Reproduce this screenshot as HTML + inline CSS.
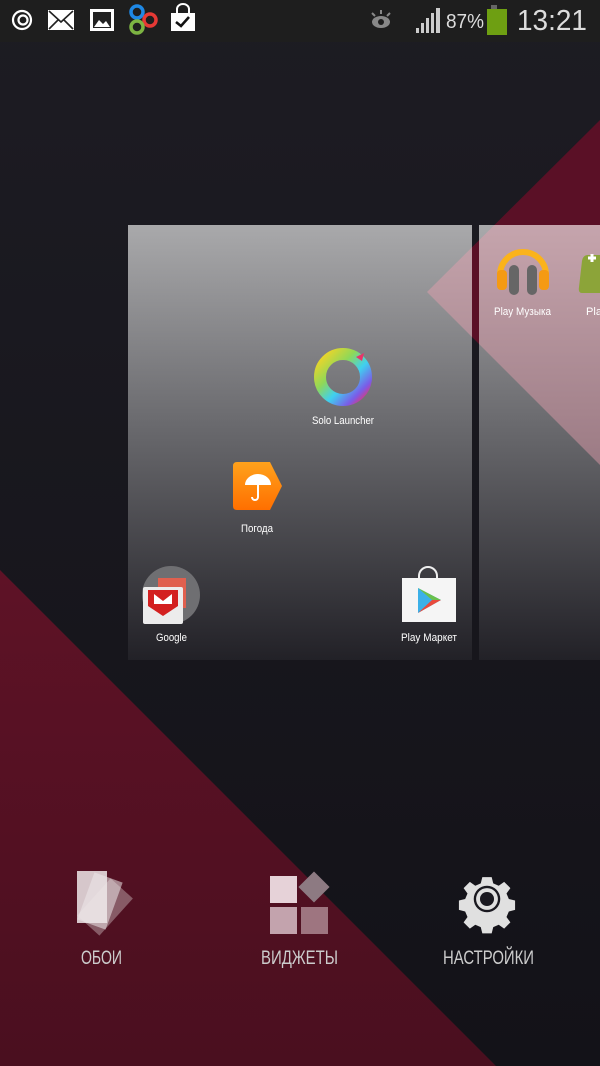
<!DOCTYPE html>
<html><head><meta charset="utf-8"><style>
html,body{margin:0;padding:0;background:#18171e;width:600px;height:1066px;overflow:hidden}
svg{display:block}
text{font-family:"Liberation Sans",sans-serif}
</style></head><body>
<svg width="600" height="1066" viewBox="0 0 600 1066" xmlns="http://www.w3.org/2000/svg">
<defs>
<linearGradient id="card" x1="0" y1="0" x2="0" y2="1">
<stop offset="0" stop-color="#a9a9ab"/><stop offset="0.45" stop-color="#6b6b6f"/><stop offset="1" stop-color="#222127"/>
</linearGradient>
<linearGradient id="bg" x1="0" y1="0" x2="0" y2="1">
<stop offset="0" stop-color="#1d1c23"/><stop offset="1" stop-color="#131218"/>
</linearGradient>
<linearGradient id="red" x1="0" y1="0" x2="0" y2="1">
<stop offset="0" stop-color="#5e1226"/><stop offset="1" stop-color="#4a0f1f"/>
</linearGradient>
<linearGradient id="ora" x1="0" y1="0" x2="0" y2="1"><stop offset="0" stop-color="#ffa21c"/><stop offset="1" stop-color="#ff6f00"/></linearGradient>
<linearGradient id="solo" x1="0" y1="0" x2="1" y2="1"><stop offset="0" stop-color="#f9d423"/><stop offset="0.35" stop-color="#8fd858"/><stop offset="0.6" stop-color="#3fd0f0"/><stop offset="0.85" stop-color="#7b5be8"/><stop offset="1" stop-color="#e8346a"/></linearGradient>
<clipPath id="cards"><rect x="128" y="225" width="344" height="435"/><rect x="479" y="225" width="121" height="435"/></clipPath>
</defs>
<rect width="600" height="1066" fill="url(#bg)"/>
<!-- status bar -->
<rect width="600" height="42" fill="#1e1e1e"/>
<g fill="none" stroke="#fff" stroke-width="2.2">
<circle cx="22" cy="20" r="9"/><circle cx="23" cy="20" r="4.5"/>
</g>
<rect x="48" y="10" width="26" height="20" fill="#fff"/>
<path d="M49 11 L61 22 L73 11 M49 29 L58 20 M73 29 L64 20" stroke="#222" stroke-width="1.6" fill="none"/>
<rect x="90" y="9" width="24" height="22" fill="#fff"/>
<rect x="93" y="12" width="18" height="16" fill="#222"/>
<path d="M94 27 L99 20 L103 24 L106 21 L110 27Z" fill="#fff"/>
<circle cx="137" cy="12" r="6" fill="none" stroke="#1e88e5" stroke-width="3.5"/>
<circle cx="150" cy="20" r="6" fill="none" stroke="#e53935" stroke-width="3.5"/>
<circle cx="137" cy="27" r="6" fill="none" stroke="#7cb342" stroke-width="3.5"/>
<rect x="171" y="13" width="24" height="18" fill="#fff"/>
<path d="M177 13 V9 a6 5 0 0 1 12 0 V13" fill="none" stroke="#fff" stroke-width="2"/>
<path d="M176 22 L181 26 L189 17" stroke="#111" stroke-width="2.6" fill="none"/>
<ellipse cx="381" cy="22" rx="9" ry="6" fill="#888"/><circle cx="381" cy="22" r="3" fill="#1e1e1e"/>
<path d="M372 13 l3 3 M381 10 v4 M390 13 l-3 3" stroke="#888" stroke-width="2"/>
<g fill="#ccc"><rect x="416" y="28" width="3" height="5"/><rect x="421" y="23" width="3" height="10"/><rect x="426" y="18" width="3" height="15"/><rect x="431" y="13" width="3" height="20"/><rect x="436" y="8" width="4" height="25"/></g>
<text x="446" y="28" fill="#ddd" font-size="20" textLength="38" lengthAdjust="spacingAndGlyphs">87%</text>
<rect x="491" y="5" width="6" height="4" fill="#666"/>
<rect x="487" y="9" width="20" height="26" fill="#6e9f12"/>
<text x="517" y="30" fill="#ddd" font-size="29" textLength="70" lengthAdjust="spacingAndGlyphs">13:21</text>
<!-- red shapes -->
<path d="M0 570 L496 1066 L0 1066Z" fill="url(#red)"/>
<path d="M427 292 L600 120 L600 465Z" fill="#5a1026"/>
<!-- cards -->
<rect x="128" y="225" width="344" height="435" fill="url(#card)"/>
<rect x="479" y="225" width="121" height="435" fill="url(#card)"/>
<path d="M427 292 L600 120 L600 465Z" fill="#e8a0b0" opacity="0.45" clip-path="url(#cards)"/>
<g font-size="11" fill="#fff">
<!-- Play music -->
<path d="M500 275 a22 22 0 0 1 46 0" fill="none" stroke="#fbb31b" stroke-width="6"/>
<rect x="497" y="270" width="10" height="20" rx="4" fill="#f59a13"/>
<rect x="539" y="270" width="10" height="20" rx="4" fill="#f59a13"/>
<rect x="509" y="265" width="10" height="30" rx="5" fill="#666"/>
<rect x="527" y="265" width="10" height="30" rx="5" fill="#666"/>
<text x="494" y="315" textLength="57" lengthAdjust="spacingAndGlyphs">Play Музыка</text>
<path d="M582 255 h18 v38 h-18 q-4 0 -3 -6 l3 -26 q1 -6 6 -6z" fill="#8ca439"/>
<path d="M588 258 h8 M592 254 v8" stroke="#fff" stroke-width="3"/>
<text x="586" y="315" textLength="16" lengthAdjust="spacingAndGlyphs">Pla</text>
<!-- solo -->
<circle cx="343" cy="377" r="23" fill="none" stroke="url(#solo)" stroke-width="12"/>
<path d="M356 357 l8 -4 l-2 8z" fill="#e8346a"/>
<text x="312" y="424" textLength="62" lengthAdjust="spacingAndGlyphs">Solo Launcher</text>
<!-- pogoda -->
<path d="M237 462 h33 l12 24 l-12 24 h-33 q-4 0 -4 -4 v-40 q0 -4 4 -4z" fill="url(#ora)"/>
<path d="M245 485 a13 11 0 0 1 26 0z" fill="#fff"/>
<path d="M258 484 v13 a3 3 0 0 1 -6 0" fill="none" stroke="#fff" stroke-width="2"/>
<text x="241" y="532" textLength="32" lengthAdjust="spacingAndGlyphs">Погода</text>
<!-- google -->
<circle cx="171" cy="595" r="29" fill="#6f6f72"/>
<rect x="158" y="578" width="28" height="30" fill="#e0604f"/>
<rect x="143" y="587" width="40" height="37" rx="2" fill="#ececec"/>
<path d="M148 590 h30 v16 l-15 10 l-15 -10z" fill="#d32020"/>
<path d="M154 594 l9 7 l9 -7 v10 h-18z" fill="#fff"/>
<text x="156" y="641" textLength="31" lengthAdjust="spacingAndGlyphs">Google</text>
<!-- play market -->
<path d="M419 580 v-4 a9 9 0 0 1 18 0 v4" fill="none" stroke="#eee" stroke-width="2"/>
<rect x="402" y="578" width="54" height="44" fill="#f5f5f5"/>
<path d="M418 588 L441 600 L418 613Z" fill="#3cb0e8"/>
<path d="M418 588 L432 600 L441 600Z" fill="#6ac04c"/>
<path d="M418 613 L432 600 L441 600Z" fill="#e84a3c"/>
<text x="401" y="641" textLength="56" lengthAdjust="spacingAndGlyphs">Play Маркет</text>
</g>
<!-- bottom -->
<g opacity="0.9">
<rect x="77" y="871" width="30" height="52" fill="#fff" opacity="0.85"/>
<rect x="85" y="876" width="30" height="50" fill="#fff" opacity="0.55" transform="rotate(20 100 901)"/>
<rect x="90" y="882" width="30" height="50" fill="#fff" opacity="0.35" transform="rotate(42 105 907)"/>
</g>
<rect x="270" y="876" width="27" height="27" fill="#e6d2d8"/>
<rect x="270" y="907" width="27" height="27" fill="#c3a3ad"/>
<rect x="301" y="907" width="27" height="27" fill="#9e7580"/>
<rect x="303" y="876" width="22" height="22" fill="#8d7a82" transform="rotate(45 314 887)"/>
<g transform="translate(487 899) scale(0.78)">
<path d="M-6 -28 h12 l2 8 l7 3 l7 -5 l8 8 l-5 7 l3 7 l8 2 v12 l-8 2 l-3 7 l5 7 l-8 8 l-7 -5 l-7 3 l-2 8 h-12 l-2 -8 l-7 -3 l-7 5 l-8 -8 l5 -7 l-3 -7 l-8 -2 v-12 l8 -2 l3 -7 l-5 -7 l8 -8 l7 5 l7 -3z" fill="#e0e0e0"/>
<circle r="17" fill="#1a1920"/>
<circle r="14" fill="#e0e0e0"/><circle r="9" fill="#1a1920"/>
</g>
<g fill="#ccc" font-size="19">
<text x="81" y="964" textLength="41" lengthAdjust="spacingAndGlyphs">ОБОИ</text>
<text x="261" y="964" textLength="77" lengthAdjust="spacingAndGlyphs">ВИДЖЕТЫ</text>
<text x="443" y="964" textLength="91" lengthAdjust="spacingAndGlyphs">НАСТРОЙКИ</text>
</g>
</svg>
</body></html>
